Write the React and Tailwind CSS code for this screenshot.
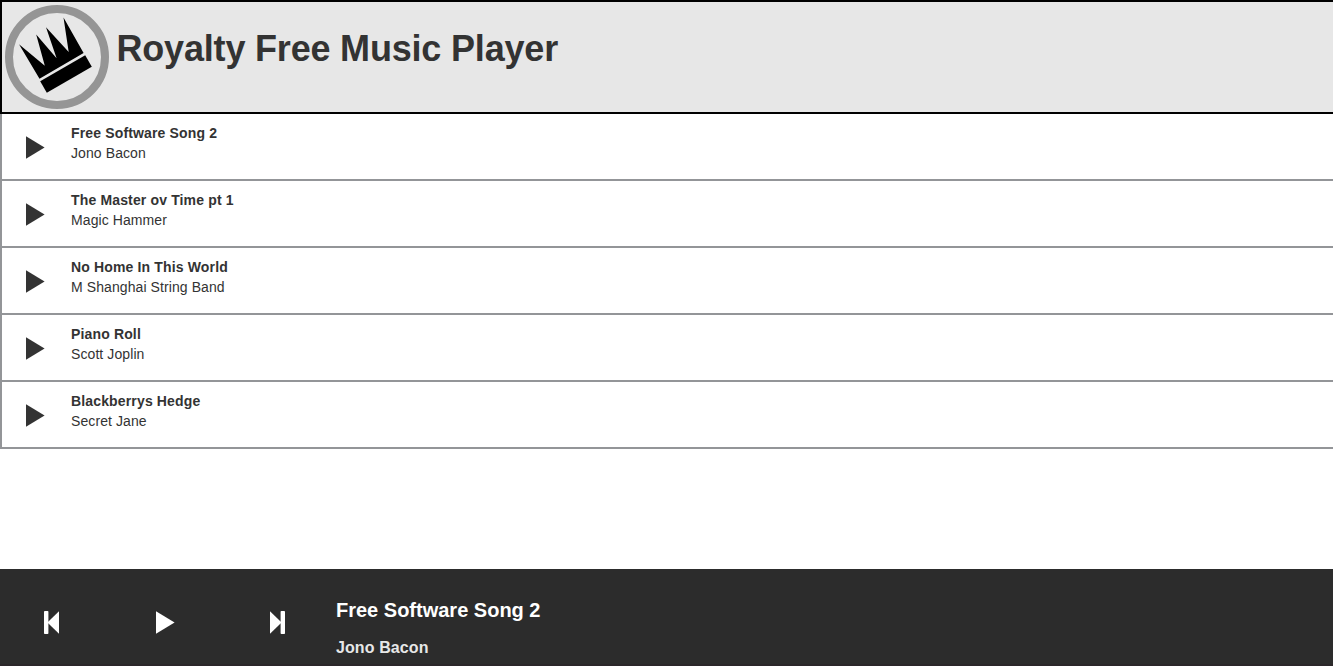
const songs = [
  { title: "Free Software Song 2", artist: "Jono Bacon" },
  { title: "The Master ov Time pt 1", artist: "Magic Hammer" },
  { title: "No Home In This World", artist: "M Shanghai String Band" },
  { title: "Piano Roll", artist: "Scott Joplin" },
  { title: "Blackberrys Hedge", artist: "Secret Jane" },
];

function Crown() {
  return (
    <svg className="size-[104px] shrink-0" viewBox="5 5 104 104" aria-hidden="true">
      <circle cx="57" cy="57" r="48" fill="none" stroke="#959595" strokeWidth="8" />
      <path
        d="M19 44.3 L44.8 65.8 L36.2 34.5 L56.6 58.2 L46 27.3 L68.7 52 L63.5 17.5 L83.6 53 L39.5 78.7 Z"
        fill="#000"
      />
      <path d="M40.2 81.2 L85.2 55.2 L91.8 66.8 L46.8 92.8 Z" fill="#000" />
    </svg>
  );
}

function PlayIcon() {
  return (
    <svg className="h-[23px] w-[19px]" viewBox="0 0 19 23" fill="currentColor" aria-hidden="true">
      <path d="M0 0.2 L18.6 11.5 L0 22.8 Z" />
    </svg>
  );
}

function SkipIcon({ className = "" }) {
  return (
    <svg className={`h-[23px] w-[15px] ${className}`} viewBox="0 0 15 23" fill="currentColor" aria-hidden="true">
      <rect x="0" y="0" width="4.4" height="23" rx="0.8" />
      <path d="M3.4 11.5 L15 0.2 V22.8 Z" />
    </svg>
  );
}

export default function App() {
  return (
    <div className="flex h-screen flex-col overflow-hidden bg-white font-['Liberation_Sans',Arial,sans-serif] text-sm text-[#333]">
      <header className="flex h-[114px] shrink-0 border-2 border-r-0 border-black bg-[#e7e7e7] pt-[3px] pl-[3px]">
        <Crown />
        <h1 className="mt-6 ml-[7.5px] text-[36px] leading-[40px] font-bold tracking-[-0.19px]">
          Royalty Free Music Player
        </h1>
      </header>
      <ul className="flex-1 overflow-hidden">
        {songs.map((song) => (
          <li key={song.title} className="flex h-[67px] border-b-2 border-l-2 border-[#939598]">
            <button className="flex w-[69px] items-start pt-[22px] pl-6" aria-label={`Play ${song.title}`}>
              <PlayIcon />
            </button>
            <div className="pt-[9px] leading-5">
              <div className="font-bold tracking-[0.15px]">{song.title}</div>
              <div className="tracking-[0.09px]">{song.artist}</div>
            </div>
          </li>
        ))}
      </ul>
      <footer className="flex h-[97px] shrink-0 border-b-2 border-[#2b272a] bg-[#2c2c2c] text-white">
        <div className="flex w-[336px] items-start pt-[42px] pl-11">
          <button aria-label="Previous">
            <SkipIcon />
          </button>
          <button className="ml-[97px]" aria-label="Play">
            <PlayIcon />
          </button>
          <button className="ml-[95px]" aria-label="Next">
            <SkipIcon className="-scale-x-100" />
          </button>
        </div>
        <div className="pt-[29px] font-bold">
          <div className="text-[20px] leading-6">Free Software Song 2</div>
          <div className="mt-4 text-base leading-5 tracking-[0.1px] text-[#e7e7e7]">Jono Bacon</div>
        </div>
      </footer>
    </div>
  );
}
